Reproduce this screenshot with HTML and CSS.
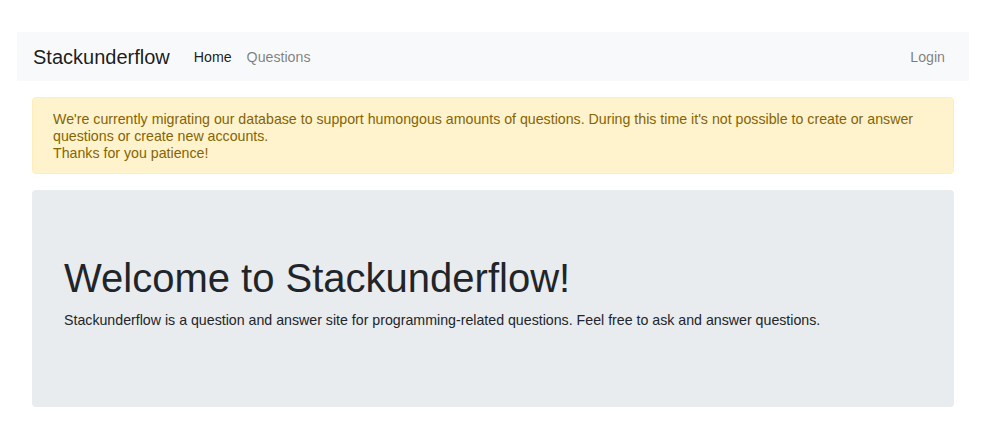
FILE: index.html
```html
<!DOCTYPE html>
<html>
<head>
<meta charset="utf-8">
<link rel="stylesheet" href="styles.css">
</head>
<body>
<div class="page">
  <nav class="navbar">
    <a class="brand" href="#">Stackunderflow</a>
    <ul class="nav">
      <li><a class="nav-link active" href="#">Home</a></li>
      <li><a class="nav-link" href="#">Questions</a></li>
    </ul>
    <ul class="nav nav-right">
      <li><a class="nav-link" href="#">Login</a></li>
    </ul>
  </nav>
  <main class="container">
    <div class="alert">We're currently migrating our database to support humongous amounts of questions. During this time it's not possible to create or answer questions or create new accounts.<br>Thanks for you patience!</div>
    <section class="jumbotron">
      <h1>Welcome to Stackunderflow!</h1>
      <p>Stackunderflow is a question and answer site for programming-related questions. Feel free to ask and answer questions.</p>
    </section>
  </main>
</div>
</body>
</html>
```
FILE: styles.css
```css
* { box-sizing: border-box; }
html, body { margin: 0; padding: 0; background: #fff; }
body {
  font-family: "Liberation Sans", Arial, sans-serif;
  font-size: 14.2px;
  line-height: 1.25;
  color: #212529;
}
.page { padding: 32px 14px 0 17px; }
.navbar {
  display: flex;
  align-items: center;
  height: 49px;
  padding: 2px 24px 0 16px;
  background: #f8f9fa;
}
.brand {
  font-size: 20px;
  color: rgba(0,0,0,.9);
  text-decoration: none;
  margin-right: 24px;
}
.nav {
  display: flex;
  list-style: none;
  margin: 0;
  padding: 0;
  gap: 15px;
}
.nav-right { margin-left: auto; }
.nav-link {
  font-size: 14.2px;
  color: rgba(0,0,0,.5);
  text-decoration: none;
}
.nav-link.active { color: rgba(0,0,0,.9); }
.container { padding: 16px 15px 0 15px; }
.alert {
  background: #fff3cd;
  border: 1px solid #ffeeba;
  color: #856404;
  border-radius: 4px;
  padding: 13px 20px 11px 20px;
  line-height: 17px;
  margin-bottom: 16px;
}
.jumbotron {
  background: #e9ecef;
  border-radius: 4px;
  height: 217px;
  padding: 64px 32px 0 32px;
}
.jumbotron h1 {
  font-size: 40px;
  font-weight: 400;
  line-height: 1.2;
  margin: 0 0 10px 0;
}
.jumbotron p { margin: 0; }
```
